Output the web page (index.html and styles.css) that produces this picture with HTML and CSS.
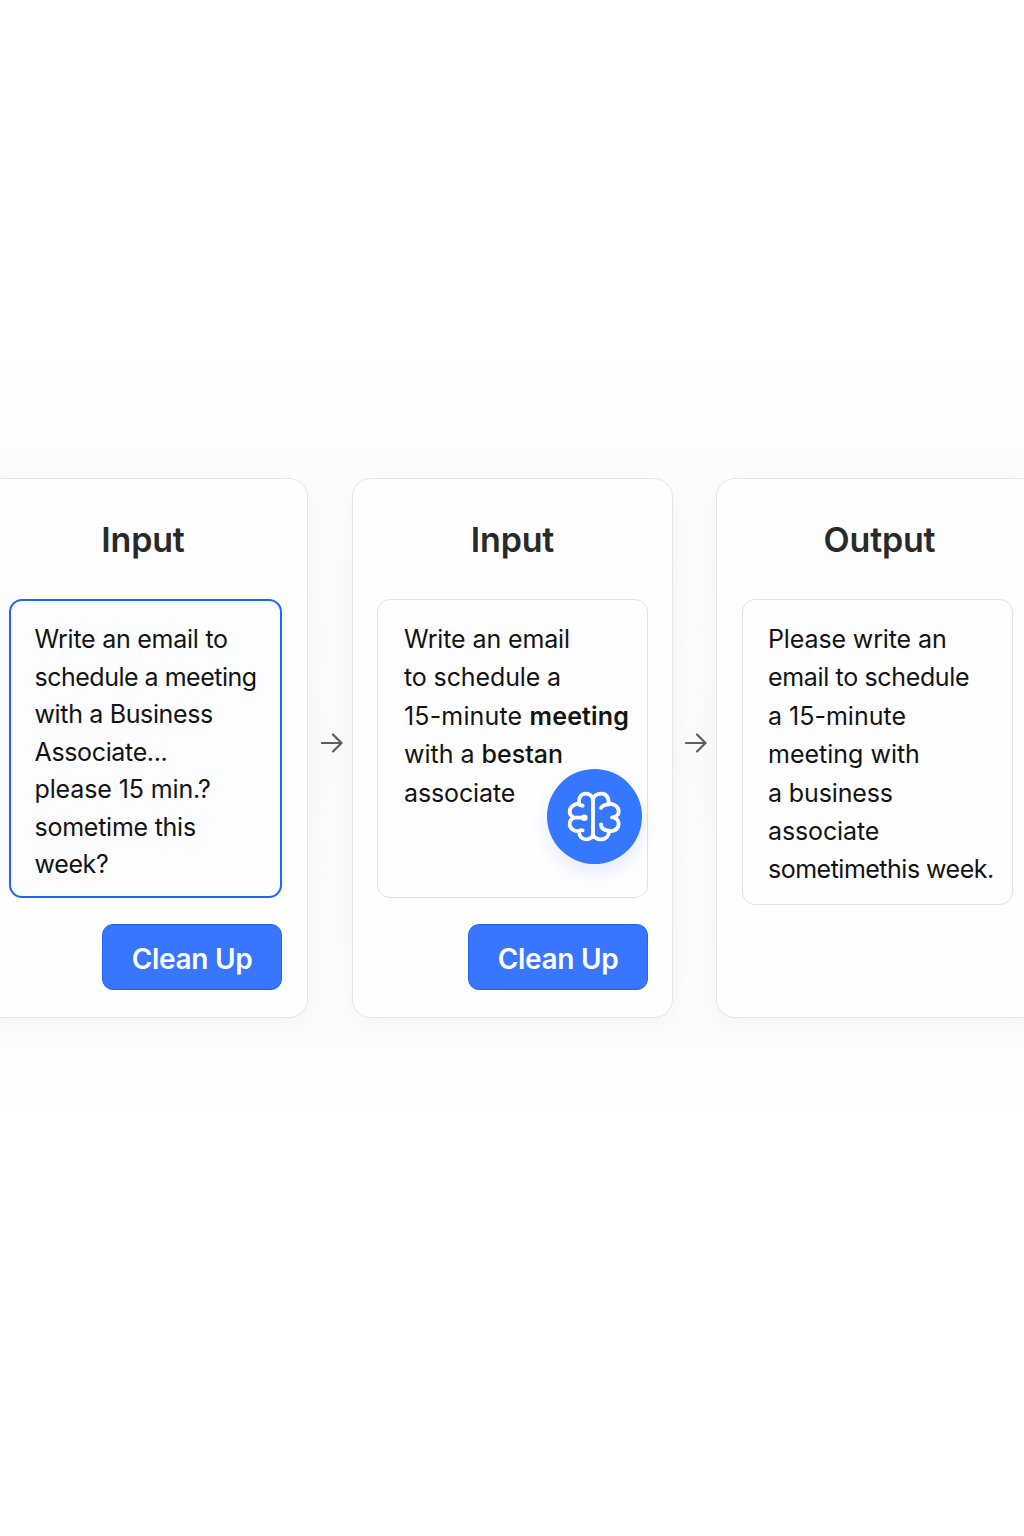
FILE: index.html
```html
<!DOCTYPE html>
<html lang="en">
<head>
<meta charset="utf-8">
<title>Clean Up</title>
<link rel="stylesheet" href="styles.css">
</head>
<body>
<main class="flow">
  <section class="card card-first">
    <h2 class="title">Input</h2>
    <div class="prompt prompt-active">
      <span class="line">Write an email to</span>
      <span class="line tight">schedule a meeting</span>
      <span class="line snug">with a Business</span>
      <span class="line snug">Associate...</span>
      <span class="line loose">please 15 min.?</span>
      <span class="line">sometime this</span>
      <span class="line snug">week?</span>
    </div>
    <button class="clean">Clean Up</button>
  </section>
  <svg class="arrow" viewBox="0 0 22 20"><path d="M1 10H20M12 1.5L20.5 10L12 18.5"/></svg>
  <section class="card">
    <h2 class="title">Input</h2>
    <div class="prompt">
      <span class="line loose">Write an email</span>
      <span class="line loose">to schedule a</span>
      <span class="line wide">15-minute <span class="strong">meeting</span></span>
      <span class="line">with a <span class="medium">bestan</span></span>
      <span class="line loose">associate</span>
      <div class="brain">
        <svg viewBox="51 42 285 285">
          <path d="M189 132C185 120 177 116 167 116C154 116 147 126 147 140L147 145C130 147 119 158 119 169C119 178 123 184 131 188C123 192 119 199 119 207C119 219 129 228 147 229C147 243 155 253 168 253C179 253 186 248 189 239"/>
          <path d="M189 132C193 120 203 116 214 116C228 116 236 126 236 145C255 147 266 157 266 169C266 178 261 184 252 187C261 191 266 198 266 207C266 220 255 228 237 229C237 243 227 253 213 253C202 253 193 248 189 239"/>
          <path d="M189 126V246M147 146Q149 152 158 152M131 188H162M147 229Q149 225 158 226M213 159C217 151 227 148 238 148M246 187H254M213 208C213 221 223 227 238 227"/>
          <circle cx="163" cy="188" r="4"/>
        </svg>
      </div>
    </div>
    <button class="clean">Clean Up</button>
  </section>
  <svg class="arrow arrow-second" viewBox="0 0 22 20"><path d="M1 10H20M12 1.5L20.5 10L12 18.5"/></svg>
  <section class="card card-last">
    <h2 class="title">Output</h2>
    <div class="prompt prompt-output">
      <span class="line loose">Please write an</span>
      <span class="line snug">email to schedule</span>
      <span class="line">a 15-minute</span>
      <span class="line">meeting with</span>
      <span class="line loose">a business</span>
      <span class="line loose">associate</span>
      <span class="line tight">sometimethis week.</span>
    </div>
  </section>
</main>
</body>
</html>
```
FILE: styles.css
```css
* { box-sizing: border-box; }
body {
  margin: 0;
  height: 1536px;
  overflow: hidden;
  font-family: Inter, "Liberation Sans", sans-serif;
  color: #131313;
  background: linear-gradient(#fff 340px, #fcfcfc 480px, #fafafa 760px, #fcfcfc 1020px, #fff 1130px);
}
.flow {
  display: flex;
  align-items: center;
  width: 1052px;
  margin-left: -13px;
  padding-top: 478px;
}
.card {
  flex: none;
  display: flex;
  flex-direction: column;
  width: 321px;
  height: 540px;
  padding: 40px 24px 0;
  border: 1px solid #e5e5e5;
  border-radius: 19px;
  background: #fefefe;
  box-shadow: 0 8px 22px rgba(0, 0, 0, .03);
}
.card-first {
  padding-left: 21px;
  padding-right: 25px;
  border-top-left-radius: 0;
  border-bottom-left-radius: 0;
}
.card-last { width: 323px; padding-left: 25px; }
.title {
  margin: 0 0 39px;
  font-size: 34px;
  line-height: 41px;
  font-weight: 560;
  letter-spacing: -.2px;
  text-align: center;
  color: #292929;
}
.card-first .title { padding-right: 5px; }
.card-last .title { padding-left: 3px; }
.prompt {
  position: relative;
  width: 271px;
  height: 299px;
  padding: 20px 0 0 26px;
  border: 1px solid #e2e2e2;
  border-radius: 13px;
  font-size: 25px;
  line-height: 38.4px;
  white-space: nowrap;
}
.prompt-active {
  width: 273px;
  padding: 20px 0 0 23.5px;
  border: 2px solid #1f66ff;
  background: #fcfdff;
  line-height: 37.5px;
  letter-spacing: -.25px;
}
.prompt-output { height: 306px; padding-left: 25px; }
.line { display: block; }
.loose { letter-spacing: -.12px; }
.snug { letter-spacing: -.35px; }
.tight { letter-spacing: -.5px; }
.wide { letter-spacing: .16px; }
.strong { font-weight: 560; }
.medium { font-weight: 480; }
.brain {
  position: absolute;
  right: 5px;
  bottom: 33px;
  width: 95px;
  height: 95px;
  border-radius: 50%;
  background: #3677ff;
  box-shadow: 0 9px 18px rgba(54, 100, 255, .12);
}
.brain svg {
  display: block;
  fill: none;
  stroke: #fff;
  stroke-width: 11.5;
  stroke-linecap: round;
  stroke-linejoin: round;
}
.clean {
  align-self: flex-end;
  width: 180px;
  height: 66px;
  margin-top: 26px;
  padding: 3px 0 0;
  border: 1px solid #1f64fb;
  border-radius: 11px;
  background: #3876ff;
  color: #fff;
  font: 570 28px/34px Inter, "Liberation Sans", sans-serif;
  letter-spacing: -.3px;
}
.arrow {
  flex: none;
  width: 22px;
  height: 20px;
  margin: 0 9.5px 10px 12.5px;
  fill: none;
  stroke: #5e5e5c;
  stroke-width: 2.2;
  stroke-linecap: round;
}
.arrow-second { margin-left: 11.5px; }
```
